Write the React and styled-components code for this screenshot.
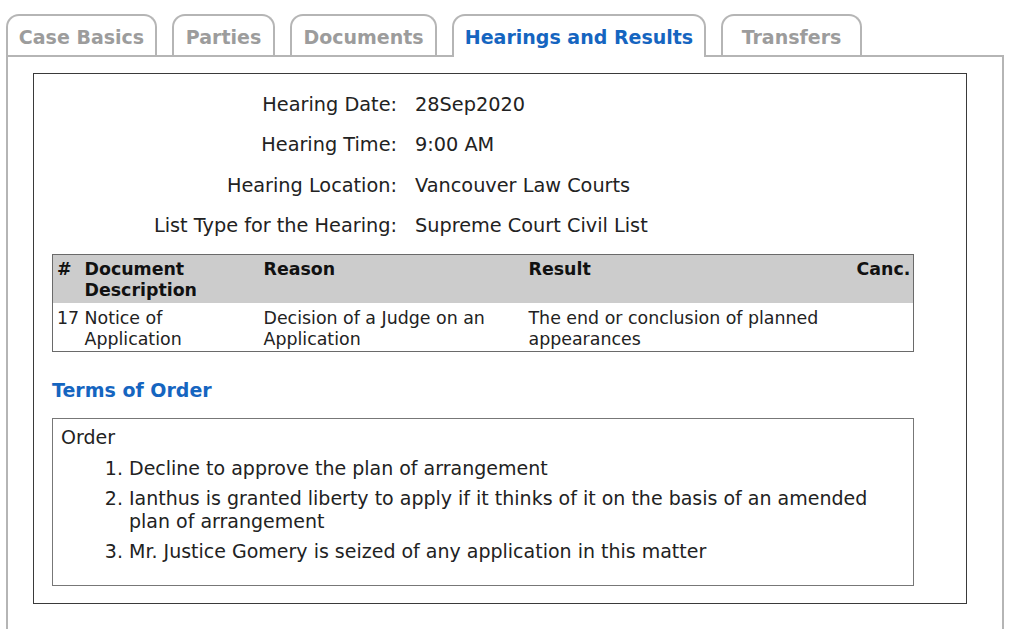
import React from "react";
import styled, { createGlobalStyle } from "styled-components";

const Global = createGlobalStyle`
  html, body { margin: 0; padding: 0; background: #fff; }
  body { font-family: "DejaVu Sans", Verdana, sans-serif; color: #222; }
`;

const Page = styled.div`
  padding: 14px 20px 0 6px;
`;

const TabBar = styled.div`
  display: flex;
  align-items: flex-end;
  gap: 15px;
  height: 41px;
`;

const Tab = styled.div`
  position: relative;
  box-sizing: border-box;
  height: ${(p) => (p.$active ? 43 : 41)}px;
  margin-bottom: ${(p) => (p.$active ? -2 : 0)}px;
  z-index: ${(p) => (p.$active ? 2 : 0)};
  width: ${(p) => p.$w}px;
  display: flex;
  align-items: center;
  justify-content: center;
  padding-top: 3px;
  padding-bottom: ${(p) => (p.$active ? 2 : 0)}px;
  border: 2px solid #b5b5b5;
  border-bottom: none;
  border-radius: 13px 13px 0 0;
  background: #fff;
  font-weight: bold;
  font-size: 19px;
  color: ${(p) => (p.$active ? "#1565c0" : "#9c9c9c")};
  white-space: nowrap;
`;

const Panel = styled.div`
  border: 2px solid #b5b5b5;
  border-bottom: none;
  padding: 16px 35px 40px 25px;
`;

const Box = styled.div`
  border: 1px solid #3a3a3a;
  padding: 10px 18px 17px 18px;
`;

const InfoGrid = styled.div`
  display: grid;
  grid-template-columns: 345px 1fr;
  column-gap: 18px;
  grid-auto-rows: 40.5px;
  align-items: center;
  font-size: 19.3px;
`;

const Label = styled.div`
  text-align: right;
  white-space: nowrap;
`;

const Value = styled.div`
  white-space: nowrap;
`;

const Table = styled.table`
  margin-top: 8px;
  width: 862px;
  border-collapse: collapse;
  border: 1px solid #6a6a6a;
  font-size: 17.4px;
  line-height: 21px;
  table-layout: fixed;
`;

const Th = styled.th`
  background: #cccccc;
  text-align: ${(p) => p.$align || "left"};
  vertical-align: top;
  font-weight: bold;
  padding: 4px 4px 2px 4px;
  color: #111;
`;

const Td = styled.td`
  vertical-align: top;
  padding: 5px 4px 1px 4px;
  text-align: ${(p) => p.$align || "left"};
`;

const Heading = styled.h3`
  margin: 26px 0 0 0;
  font-size: 19px;
  line-height: 24px;
  color: #1565c0;
  font-weight: bold;
`;

const OrderBox = styled.div`
  margin-top: 16px;
  width: 862px;
  box-sizing: border-box;
  border: 1px solid #777;
  padding: 7px 8px 22px 8px;
  font-size: 19px;
  line-height: 23px;
`;

const OrderList = styled.ol`
  margin: 8px 0 0 0;
  padding-left: 68px;
`;

const OrderItem = styled.li`
  margin-top: ${(p) => (p.$first ? 0 : 7)}px;
`;

const tabs = [
  { label: "Case Basics", w: 151 },
  { label: "Parties", w: 103 },
  { label: "Documents", w: 147 },
  { label: "Hearings and Results", w: 254, active: true },
  { label: "Transfers", w: 141 },
];

const info = [
  ["Hearing Date:", "28Sep2020"],
  ["Hearing Time:", "9:00 AM"],
  ["Hearing Location:", "Vancouver Law Courts"],
  ["List Type for the Hearing:", "Supreme Court Civil List"],
];

const orders = [
  "Decline to approve the plan of arrangement",
  "Ianthus is granted liberty to apply if it thinks of it on the basis of an amended plan of arrangement",
  "Mr. Justice Gomery is seized of any application in this matter",
];

export default function App() {
  return (
    <>
      <Global />
      <Page>
        <TabBar>
          {tabs.map((t) => (
            <Tab key={t.label} $w={t.w} $active={t.active}>
              {t.label}
            </Tab>
          ))}
        </TabBar>
        <Panel>
          <Box>
            <InfoGrid>
              {info.map(([l, v]) => (
                <React.Fragment key={l}>
                  <Label>{l}</Label>
                  <Value>{v}</Value>
                </React.Fragment>
              ))}
            </InfoGrid>
            <Table>
              <colgroup>
                <col style={{ width: 28 }} />
                <col style={{ width: 179 }} />
                <col style={{ width: 265 }} />
                <col style={{ width: 328 }} />
                <col />
              </colgroup>
              <thead>
                <tr>
                  <Th>#</Th>
                  <Th>Document Description</Th>
                  <Th>Reason</Th>
                  <Th>Result</Th>
                  <Th $align="right">Canc.</Th>
                </tr>
              </thead>
              <tbody>
                <tr>
                  <Td>17</Td>
                  <Td>Notice of Application</Td>
                  <Td>Decision of a Judge on an Application</Td>
                  <Td>The end or conclusion of planned appearances</Td>
                  <Td $align="right"></Td>
                </tr>
              </tbody>
            </Table>
            <Heading>Terms of Order</Heading>
            <OrderBox>
              Order
              <OrderList>
                {orders.map((o, i) => (
                  <OrderItem key={i} $first={i === 0}>
                    {o}
                  </OrderItem>
                ))}
              </OrderList>
            </OrderBox>
          </Box>
        </Panel>
      </Page>
    </>
  );
}
